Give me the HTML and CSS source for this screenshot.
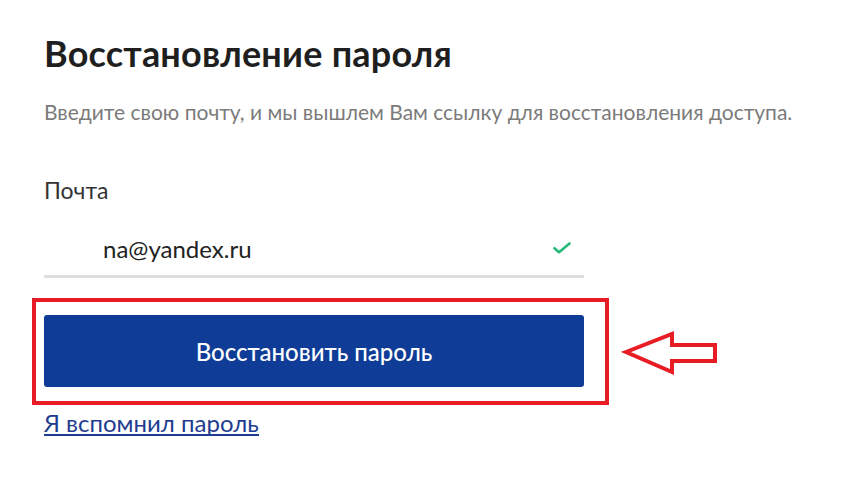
FILE: index.html
```html
<!DOCTYPE html>
<html lang="ru">
<head>
<meta charset="utf-8">
<title>Восстановление пароля</title>
<link rel="stylesheet" href="styles.css">
</head>
<body>
<main class="page">
  <h1 class="title">Восстановление пароля</h1>
  <p class="lead">Введите свою почту, и мы вышлем Вам ссылку для восстановления доступа.</p>
  <form class="form">
    <label class="label" for="email">Почта</label>
    <div class="field">
      <span class="field-value" id="email">na@yandex.ru</span>
      <svg class="check" width="18" height="12" viewBox="0 0 18 12" aria-hidden="true">
        <path d="M1.5 6.2 L6 10.2 L16.5 1.5" fill="none" stroke="#27b97b" stroke-width="2.6" stroke-linecap="round" stroke-linejoin="round"/>
      </svg>
    </div>
    <div class="submit-wrap">
      <button type="button" class="submit">Восстановить пароль</button>
      <svg class="arrow" width="100" height="48" viewBox="0 0 100 48" aria-hidden="true">
        <polygon points="5,23 51,5 51,16 94,16 94,32 51,32 51,43" fill="none" stroke="#e81c24" stroke-width="4" stroke-linejoin="miter"/>
      </svg>
    </div>
    <a class="remember" href="#">Я вспомнил пароль</a>
  </form>
</main>
</body>
</html>
```

FILE: styles.css
```css
html, body {
  margin: 0;
  padding: 0;
  background: #ffffff;
}

body {
  font-family: Lato, "Open Sans", "Liberation Sans", sans-serif;
  color: #222222;
}

.page {
  padding: 29px 0 0 44px;
}

.title {
  margin: 0;
  font-size: 36px;
  line-height: 48px;
  font-weight: 700;
  color: #1f1f1f;
  letter-spacing: 0.2px;
}

.lead {
  margin: 23px 0 0 0;
  font-size: 21px;
  line-height: 24px;
  color: #7b7b7b;
  white-space: nowrap;
}

.form {
  width: 540px;
  display: flex;
  flex-direction: column;
  align-items: flex-start;
}

.label {
  margin-top: 54px;
  font-size: 23px;
  line-height: 24px;
  color: #333333;
}

.field {
  margin-top: 21px;
  width: 100%;
  box-sizing: border-box;
  height: 55px;
  border-bottom: 3px solid #dedede;
  display: flex;
  align-items: center;
  justify-content: space-between;
  padding: 0 13px 2px 59px;
}

.field-value {
  font-size: 24px;
  color: #222222;
}

.check {
  display: block;
}

.submit-wrap {
  position: relative;
  margin-top: 37px;
  width: 100%;
}

.submit-wrap::before {
  content: "";
  position: absolute;
  top: -17px;
  left: -12px;
  right: -25px;
  bottom: -18px;
  border: 4px solid #e81c24;
  pointer-events: none;
}

.submit {
  display: block;
  width: 100%;
  height: 72px;
  border: 0;
  border-radius: 3px;
  background: #0f3c96;
  color: #ffffff;
  font-family: Lato, "Open Sans", "Liberation Sans", sans-serif;
  font-size: 24px;
  font-weight: 500;
  cursor: pointer;
}

.arrow {
  position: absolute;
  left: 577px;
  top: 14px;
}

.remember {
  margin-top: 25px;
  font-size: 24px;
  line-height: 22px;
  color: #1f3d90;
  text-decoration: none;
  border-bottom: 2px solid #1f3d90;
}
```
